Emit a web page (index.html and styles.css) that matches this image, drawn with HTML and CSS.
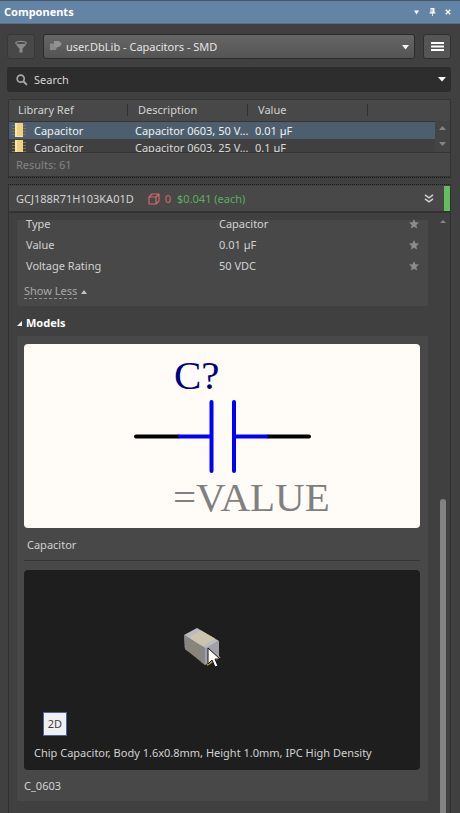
FILE: index.html
```html
<!DOCTYPE html>
<html lang="en">
<head>
<meta charset="utf-8">
<meta name="viewport" content="width=device-width, initial-scale=1">
<title>Components</title>
<link rel="stylesheet" href="styles.css">
</head>
<body>
<header class="titlebar">
  <h1>Components</h1>
  <button class="title-button" aria-label="Panel menu"><svg width="7" height="5" viewBox="0 0 7 5"><path d="M1 0.5h5L3.5 4.5z" fill="#fff"/></svg></button>
  <button class="title-button" aria-label="Pin"><svg width="7" height="8" viewBox="0 0 7 8"><path d="M1.5 0h4v4.500h1v1H.5v-1h1z" fill="#fff"/><path d="M2.500 1v3.500M3.500 5v3" stroke="#dce6ef" stroke-width="1"/><path d="M3 1v3" stroke="#6484a5" stroke-width=".7"/></svg></button>
  <button class="title-button" aria-label="Close"><svg width="6" height="6" viewBox="0 0 6 6"><path d="M.7.7l4.600 4.600M5.300.7L.7 5.300" stroke="#fff" stroke-width="1.400"/></svg></button>
</header>

<main class="panel">
  <div class="toolbar">
    <button class="tool filter" aria-label="Filter"><svg width="14" height="14" viewBox="0 0 14 14"><ellipse cx="7" cy="3" rx="5.200" ry="1.700" fill="none" stroke="#8c8c8c" stroke-width="1.300"/><path d="M1.500 4.200L5.500 8.500V12.500h3v-4l4-4.300Q7 6.300 1.500 4.200z" fill="#8c8c8c"/></svg></button>
    <div class="combo">
      <svg class="combo-icon" width="12" height="10" viewBox="0 0 12 10"><path d="M4 0h5l3 3-3 3H4z" fill="#929292"/><path d="M0 2.500h4V6h3.500L5.500 9H0z" fill="#8a8a8a"/></svg>
      <select aria-label="Library"><option>user.DbLib - Capacitors - SMD</option></select>
      <svg class="combo-arrow" width="7" height="5" viewBox="0 0 7 5"><path d="M0 0h7L3.500 4.500z" fill="#f4f4f4"/></svg>
    </div>
    <button class="tool menu" aria-label="Menu"><svg width="13" height="9" viewBox="0 0 13 9"><path d="M0 1h13M0 4.500h13M0 8h13" stroke="#fff" stroke-width="2"/></svg></button>
  </div>

  <div class="search">
    <svg class="search-icon" width="12" height="12" viewBox="0 0 12 12"><circle cx="4.700" cy="4.700" r="3.500" fill="none" stroke="#a8a8a8" stroke-width="1.700"/><path d="M7.300 7.300l3.600 3.600" stroke="#a8a8a8" stroke-width="2"/></svg>
    <input type="text" placeholder="Search" aria-label="Search">
    <button class="search-more" aria-label="Search history"><svg width="8" height="5" viewBox="0 0 8 5"><path d="M0 0h8L4 4.500z" fill="#fff"/></svg></button>
  </div>

  <section class="results">
    <div class="grid">
      <table>
        <colgroup><col class="col"><col class="col"><col class="col"><col></colgroup>
        <thead><tr><th scope="col">Library Ref</th><th scope="col">Description</th><th scope="col">Value</th><td></td></tr></thead>
        <tbody>
          <tr class="selected"><td><span class="part"><svg width="16" height="14" viewBox="0 0 16 14"><path d="M1 2.500h14M1 5.500h14M1 8.500h14M1 11.500h14" stroke="#857748"/><path d="M4 0h8v14H4z" fill="#f3d17c"/><path d="M4 0h2v13h6v1H4z" fill="#fbe7ad"/></svg>Capacitor</span></td><td>Capacitor 0603, 50 V...</td><td>0.01 µF</td><td></td></tr>
          <tr><td><span class="part"><svg width="16" height="14" viewBox="0 0 16 14"><path d="M1 2.500h14M1 5.500h14M1 8.500h14M1 11.500h14" stroke="#857748"/><path d="M4 0h8v14H4z" fill="#f3d17c"/><path d="M4 0h2v13h6v1H4z" fill="#fbe7ad"/></svg>Capacitor</span></td><td>Capacitor 0603, 25 V...</td><td>0.1 µF</td><td></td></tr>
        </tbody>
      </table>
      <div class="grid-scroll">
        <svg width="7" height="4" viewBox="0 0 7 4"><path d="M0 4h7L3.500 0z" fill="#858585"/></svg>
        <svg width="7" height="4" viewBox="0 0 7 4"><path d="M0 0h7L3.500 4z" fill="#858585"/></svg>
      </div>
    </div>
    <p class="count">Results: 61</p>
  </section>

  <div class="splitter"></div>

  <section class="details">
    <header class="part-header">
      <h2>GCJ188R71H103KA01D</h2>
      <svg class="stock-icon" width="12" height="12" viewBox="0 0 12 12"><path d="M1 4h7v7H1zM1 4l3-3h7L8 4M11 1v7l-3 3" fill="none" stroke="#cf6868" stroke-width="1.200" stroke-linejoin="round"/></svg>
      <span class="stock">0</span>
      <span class="price">$0.041 (each)</span>
      <button class="collapse" aria-label="Collapse"><svg width="10" height="9" viewBox="0 0 10 9"><path d="M1 .8l4 3 4-3M1 4.800l4 3 4-3" fill="none" stroke="#d0d0d0" stroke-width="1.500"/></svg></button>
      <span class="status"></span>
    </header>
    <div class="scroller">
      <div class="content">
        <div class="card properties">
          <dl>
            <div class="row"><dt>Type</dt><dd>Capacitor</dd><dd class="star"><svg width="10" height="10" viewBox="0 0 10 10"><path d="M5 0l1.400 3.300 3.600.3-2.700 2.400.8 3.500L5 7.700 1.900 9.500l.8-3.500L0 3.600l3.600-.3z"/></svg></dd></div>
            <div class="row"><dt>Value</dt><dd>0.01 µF</dd><dd class="star"><svg width="10" height="10" viewBox="0 0 10 10"><path d="M5 0l1.400 3.300 3.600.3-2.700 2.400.8 3.500L5 7.700 1.900 9.500l.8-3.500L0 3.600l3.600-.3z"/></svg></dd></div>
            <div class="row"><dt>Voltage Rating</dt><dd>50 VDC</dd><dd class="star"><svg width="10" height="10" viewBox="0 0 10 10"><path d="M5 0l1.400 3.300 3.600.3-2.700 2.400.8 3.500L5 7.700 1.900 9.500l.8-3.500L0 3.600l3.600-.3z"/></svg></dd></div>
          </dl>
          <a class="less" href="#"><span>Show Less</span><svg width="6" height="4" viewBox="0 0 6 4"><path d="M0 4h6L3 0z" fill="#c4c4c4"/></svg></a>
        </div>
        <h3><svg width="5" height="5" viewBox="0 0 5 5"><path d="M5 0v5H0z" fill="#f0f0f0"/></svg>Models</h3>
        <div class="card models">
          <svg class="symbol" viewBox="0 0 396 184" role="img" aria-label="Capacitor symbol">
            <g stroke-width="4" stroke-linecap="round">
              <path d="M112 92.500H154M244 92.500H285" stroke="#000"/>
              <path d="M154 92.500H187M210 92.500H244" stroke="#00f" stroke-linecap="butt"/>
              <path d="M187.500 58V127M210 58V127" stroke="#00f"/>
            </g>
            <text class="designator" x="150" y="45">C?</text>
            <text class="value" x="149" y="167">=VALUE</text>
          </svg>
          <p class="symbol-name">Capacitor</p>
          <div class="footprint">
            <svg class="chip" width="40" height="42" viewBox="0 0 40 42" role="img" aria-label="Chip capacitor">
              <path d="M1 19l2 2M23 38l13-8" stroke="#b49a20" stroke-width="2"/>
              <path d="M0 8L13 1l22 13-14 8z" fill="#bcbcc0"/>
              <path d="M5 10.500L17 3.500 31 11.500 19 19z" fill="#cdc4ae"/>
              <path d="M0 8l21 13v17L1 22z" fill="#8a857a"/>
              <path d="M0 8l4 2.500v14L1 22zM17 18.500l4 2.500V38l-4-3z" fill="#85858a"/>
              <path d="M21 21l14-7v16l-14 8z" fill="#a2a2a6"/>
              <path d="M24 21V37l4-4 3 7 3-1-3-7h5z" fill="#fff" stroke="#111" stroke-width="1"/>
            </svg>
            <button class="view">2D</button>
            <p>Chip Capacitor, Body 1.6x0.8mm, Height 1.0mm, IPC High Density</p>
          </div>
          <p class="footprint-name">C_0603</p>
        </div>
      </div>
      <div class="scrollbar">
        <svg width="6" height="3" viewBox="0 0 6 3"><path d="M0 3h6L3 0z" fill="#858585"/></svg>
        <span class="thumb"></span>
      </div>
    </div>
  </section>
</main>
</body>
</html>
```
FILE: styles.css
```css
* { box-sizing: border-box; }

body, h1, h2, h3, p, dl, dd { margin: 0; }

body {
  display: flex;
  flex-direction: column;
  height: 100vh;
  overflow: hidden;
  background: #404040;
  color: #d2d2d2;
  font: 11px/16px "Noto Sans", "Open Sans", sans-serif;
}

svg { display: block; flex: none; }
h1, h2, h3 { font-size: inherit; }
button, input, select { font: inherit; color: inherit; }
button {
  display: flex;
  align-items: center;
  justify-content: center;
  padding: 0;
  border: 0;
  background: none;
}

.titlebar {
  display: flex;
  align-items: center;
  gap: 4px;
  height: 24px;
  padding: 0 6px 0 4px;
  border-top: 1px solid #465669;
  border-bottom: 1px solid #55718d;
  background: #6484a5;
  color: #fff;
}
.titlebar h1 { flex: 1; }
.title-button { width: 12px; height: 16px; }

.panel {
  flex: 1;
  display: flex;
  flex-direction: column;
  min-height: 0;
  padding: 10px 9px 0 7px;
}

.toolbar { display: flex; gap: 8px; height: 25px; }
.tool {
  width: 28px;
  border: 1px solid #303030;
  border-radius: 3px;
  background: #555;
}
.filter { border-color: #383838; background: #484848; }
.combo { position: relative; flex: 1; }
.combo select {
  width: 100%;
  height: 25px;
  padding: 0 24px 0 22px;
  border: 1px solid #2c2c2c;
  border-radius: 3px;
  appearance: none;
  background: linear-gradient(#666, #545454);
  color: #e4e4e4;
}
.combo-icon { position: absolute; left: 7px; top: 7px; }
.combo-arrow { position: absolute; right: 6px; top: 11px; }

.search {
  display: flex;
  align-items: center;
  gap: 6px;
  height: 25px;
  margin-top: 8px;
  padding: 0 5px 0 9px;
  border-radius: 3px;
  background: #2d2d2d;
}
.search input {
  flex: 1;
  min-width: 0;
  padding: 0;
  border: 0;
  outline: 0;
  background: none;
}
.search input::placeholder { color: #d6d6d6; opacity: 1; }

.results {
  margin: 7px 0 0 1px;
  border: 1px solid #333;
  border-radius: 2px 2px 0 0;
  background: #484848;
}
.grid {
  position: relative;
  height: 53px;
  overflow: hidden;
  border-bottom: 1px solid #353535;
  background: #404040;
}
table { width: 100%; table-layout: fixed; border-collapse: collapse; }
.col { width: 120px; }
th, td { padding: 0; text-align: left; white-space: nowrap; font-weight: normal; }
thead { background: #484848; }
thead tr { height: 21px; border-bottom: 1px solid #353535; }
th { padding-left: 9px; background: linear-gradient(#2f2f2f, #2f2f2f) right 1px center / 1px 12px no-repeat; }
tbody tr { height: 17px; line-height: 17px; }
tbody td { padding-left: 6px; color: #dadada; }
tbody td:first-child { padding-left: 2px; }
.selected { background: #4d5f6e; }
.selected td { color: #f0f0f0; }
.part { display: flex; align-items: center; gap: 7px; height: 17px; }
.grid-scroll {
  position: absolute;
  top: 21px;
  right: 0;
  bottom: 0;
  display: flex;
  flex-direction: column;
  align-items: center;
  justify-content: space-between;
  width: 15px;
  padding: 5px 0 6px;
  background: #444;
}
.count { padding: 4px 7px 3px; color: #858585; }

.splitter {
  height: 9px;
  margin-left: 1px;
  background:
    repeating-linear-gradient(90deg, #1c1c1c 0 1px, #404040 1px 2px) left top / 100% 1px no-repeat,
    repeating-linear-gradient(90deg, #1c1c1c 0 1px, #404040 1px 2px) left bottom 1px / 100% 1px no-repeat;
}

.details {
  flex: 1;
  display: flex;
  flex-direction: column;
  min-height: 0;
  margin-left: 1px;
  border-right: 1px solid #303030;
  border-left: 1px solid #303030;
}
.part-header {
  display: flex;
  align-items: center;
  height: 27px;
  padding-left: 7px;
  border-bottom: 2px solid #333;
  background: #484848;
}
.part-header h2 { font-weight: normal; }
.stock-icon { margin-left: 14px; }
.stock { margin-left: 5px; color: #cf6868; }
.price { margin-left: 6px; color: #5dae5b; }
.collapse { margin-left: auto; width: 16px; height: 16px; }
.status { width: 6px; height: 25px; margin-left: 7px; background: #64bd5f; }

.scroller { flex: 1; display: flex; min-height: 0; overflow: hidden; padding: 7px 0 0 8px; }
.content { flex: 1; min-width: 0; }
.card { border-radius: 2px; background: #484848; }
.properties { display: flow-root; height: 86px; padding-left: 9px; }
.properties dl { margin-top: -7px; }
.row { display: flex; align-items: center; height: 21px; }
.row dt { flex: 0 0 48%; }
.row dd { flex: 1; }
.row .star { flex: none; margin-right: 9px; fill: #8c8c8c; }
.less {
  display: inline-flex;
  align-items: center;
  gap: 4px;
  margin: 8px 0 0 -2px;
  color: #a8a8a8;
  text-decoration: none;
}
.less span { line-height: 14px; border-bottom: 1px dashed #929292; }
h3 {
  display: flex;
  align-items: center;
  gap: 4px;
  height: 30px;
  padding-top: 4px;
  color: #fff;
}
.models { padding: 8px 8px 7px 7px; }
.symbol {
  width: 100%;
  height: auto;
  border-radius: 4px;
  background: #fffcf7;
}
.symbol text { font: 41px "Liberation Serif", serif; }
.symbol .designator { fill: #000080; }
.symbol .value { fill: #808080; }
.symbol-name { padding: 9px 3px 7px; border-bottom: 1px solid #363636; }
.footprint {
  height: 200px;
  margin-top: 9px;
  padding: 57px 10px 0;
  border-radius: 4px;
  background: #1e1e1e;
}
.chip { margin-left: 40%; }
.view {
  width: 24px;
  height: 24px;
  margin: 43px 0 0 9px;
  border: 1px solid #4d62a3;
  background: #f0f0f0;
  color: #3c3c3c;
}
.footprint p { margin-top: 9px; }
.footprint-name { margin-top: 8px; }

.scrollbar {
  flex: none;
  display: flex;
  flex-direction: column;
  align-items: center;
  width: 22px;
  padding-left: 8px;
}
.thumb { flex: 1; width: 6px; margin-top: 276px; border-radius: 3px 3px 0 0; background: #828282; }
```
